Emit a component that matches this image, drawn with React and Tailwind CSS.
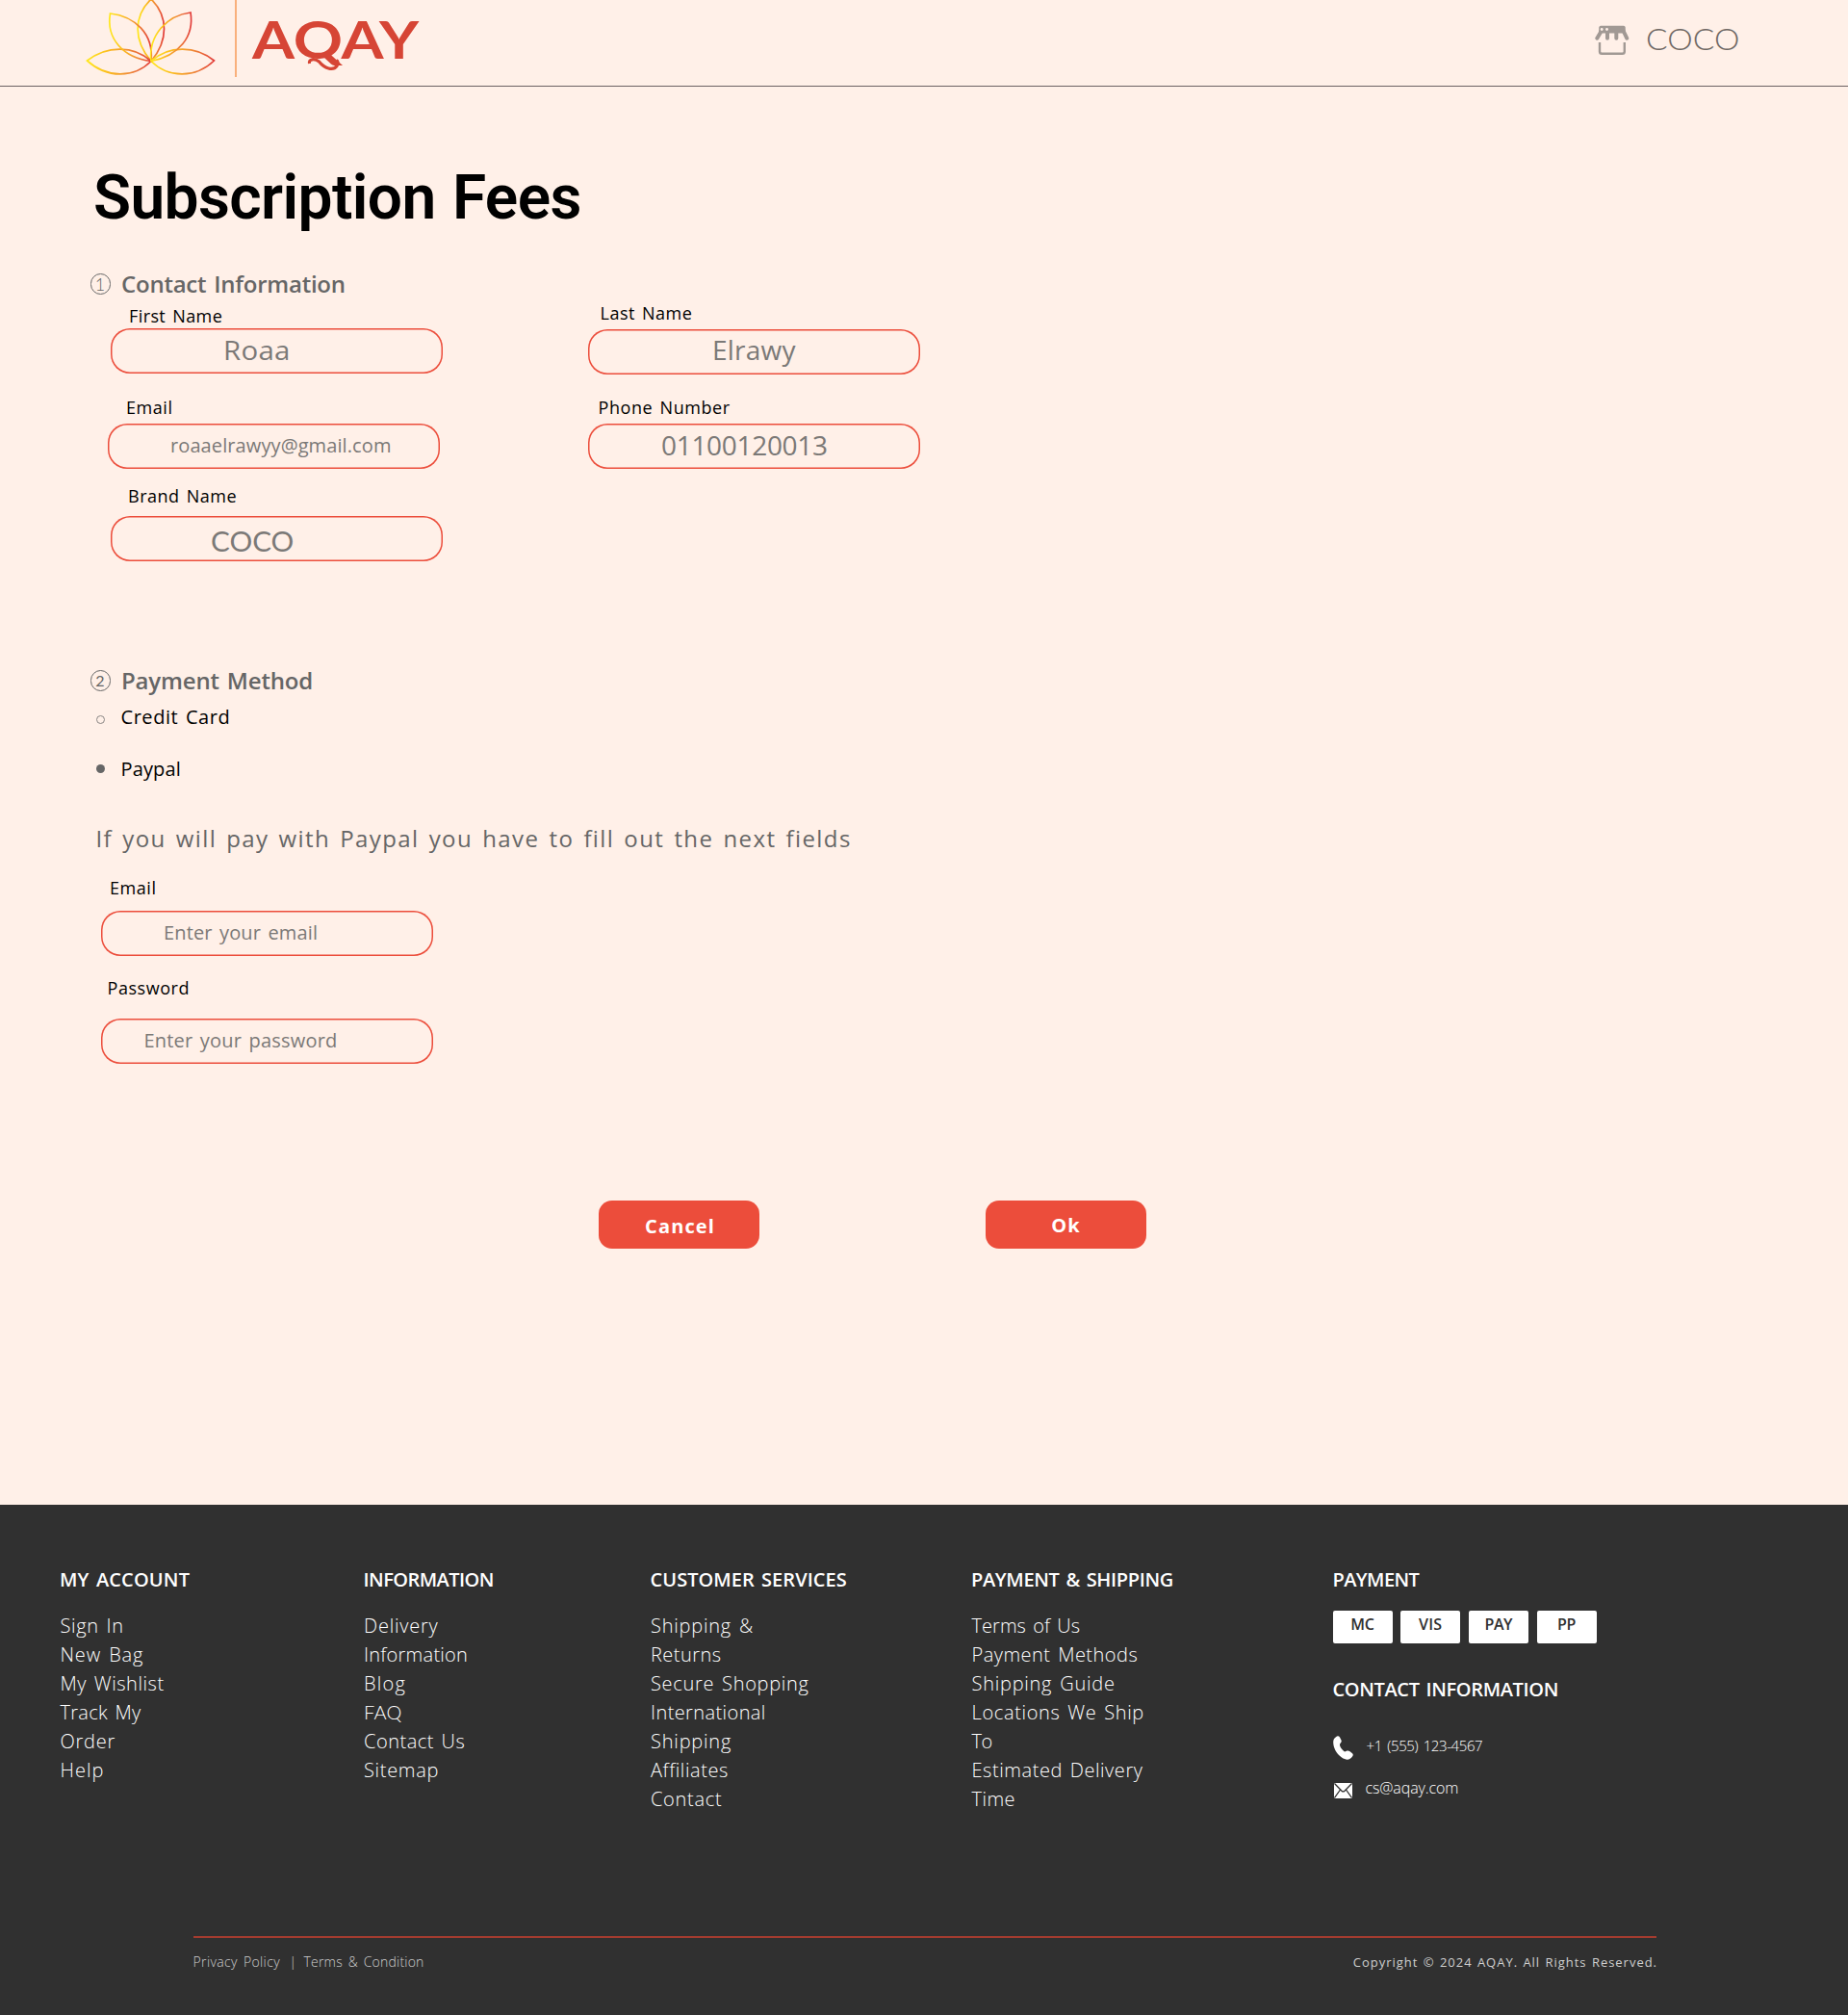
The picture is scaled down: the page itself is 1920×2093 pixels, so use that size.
import React from "react";

const OS = "font-['Open_Sans','Noto_Sans',sans-serif]";
const LATO = "font-['Lato','Open_Sans',sans-serif]";

const PETALS = [
  "M157 -1 C138.5 17 138.5 42 157 63.5 C175 42 175 17 157 -1Z",
  "M90.5 63 C111 47 139 47 157 63.5 C139 81.5 111 81.5 90.5 63Z",
  "M222.5 63 C203 47 175 47 157 63.5 C175 81.5 203 81.5 222.5 63Z",
  "M114.5 14 C140 17 160 35 157 63.5 C128 60 110 40 114.5 14Z",
  "M198 13 C174 16 154 36 157 63.5 C186 58 202 38 198 13Z",
];

function Lotus() {
  return (
    <svg className="h-20 w-[140px] shrink-0" viewBox="88 0 140 80" fill="none">
      <defs>
        <linearGradient id="petal" x1="0" y1="0" x2="1" y2="0">
          <stop offset="0" stopColor="#ffe81f" />
          <stop offset="0.3" stopColor="#fcc01c" />
          <stop offset="0.65" stopColor="#f08c35" />
          <stop offset="1" stopColor="#e23c3a" />
        </linearGradient>
      </defs>
      {PETALS.map((d) => (
        <path key={d} d={d} stroke="url(#petal)" strokeWidth="1.7" />
      ))}
    </svg>
  );
}

function Wordmark() {
  return (
    <svg className="ml-[14px] h-20 w-[180px] shrink-0" viewBox="260 0 180 80">
      <text
        x="262"
        y="61"
        textLength="173"
        lengthAdjust="spacingAndGlyphs"
        fill="#d64535"
        className="font-['Lato','Open_Sans',sans-serif] text-[54px] font-bold"
      >
        AQAY
      </text>
      <path
        d="M321.5 66 C320.5 61 327 60.5 331.500 64 C337 71 346 74 350 68.500 C351.500 66 351.500 63.500 349.500 62.800"
        fill="none"
        stroke="#d64535"
        strokeWidth="3.200"
      />
    </svg>
  );
}

function StoreIcon() {
  return (
    <svg className="mt-[26px] h-8 w-9 shrink-0" viewBox="0 0 36 32" fill="none">
      <path d="M6 .8H30Q31.500 .8 31.700 2.500L32 8.500H4L4.300 2.500Q4.500 .8 6 .8Z" fill="#a19994" />
      <path d="M6 7.500L2.300 13.700M13 7V13.700M22.300 7V13.700M30.300 7.500L33.200 13.700" stroke="#a19994" strokeWidth="4" strokeLinecap="round" />
      <path d="M5 18V27.500Q5 29.800 7.300 29.800H28.500Q30.800 29.800 30.800 27.500V18" stroke="#a19994" strokeWidth="2.400" />
      <circle cx="7.200" cy="4.500" r="1.400" fill="#fff0e8" />
      <circle cx="12.500" cy="4.500" r="1.400" fill="#fff0e8" />
    </svg>
  );
}

function PhoneIcon() {
  return (
    <svg className="mt-[3px] h-[25px] w-[21px]" viewBox="0 0 21 25" fill="#fff">
      <path d="M3 1.200C4.500 -.3 6 0 7 1.500L8.600 4.800C9 6 8.400 7 7.600 7.800C6 9.200 7.500 13 11.500 16.300C12.800 16.800 13.500 16 14.500 15.600C15.500 15.200 16.500 15.400 17.500 16.200L20 18.200C21 19.200 21 20 20.200 21.300C17.500 25.500 13.500 25.600 9 22.500C3 18 .2 12 .2 6.500C.3 4 1.200 2.300 3 1.200Z" />
    </svg>
  );
}

function MailIcon() {
  return (
    <svg className="mt-2 ml-px h-4 w-[19px]" viewBox="0 0 19 16" fill="none">
      <rect width="19" height="16" rx="1" fill="#fff" />
      <path d="M.5 .5L8 8.200Q9.500 9.500 11 8.200L18.500 .5M.5 15.500L6.500 7M18.500 15.500L12.500 7" stroke="#303030" strokeWidth="1.300" />
    </svg>
  );
}

function Field({ label, labelClass, value, boxClass, valueClass }) {
  return (
    <div className="flex flex-col">
      <label className={`text-[18px] leading-6 whitespace-nowrap text-black [word-spacing:2px] ${labelClass}`}>{label}</label>
      <div className={`h-[47px] w-[345px] rounded-[20px] whitespace-nowrap text-[#7b7977] shadow-[inset_0_0_0_1.5px_#ec4d3b] ${boxClass}`}>
        <div className={valueClass}>{value}</div>
      </div>
    </div>
  );
}

function SectionTitle({ number, title, className, titleClass, numberClass }) {
  return (
    <div className={`ml-[93.5px] flex h-8 items-center text-[#666666] ${className}`}>
      <span className={`mt-[2px] flex h-[22px] w-[21px] items-center justify-center rounded-full border border-[#666666] leading-none ${LATO} ${numberClass}`}>
        {number}
      </span>
      <h2 className={`mt-[2px] ml-[11.5px] text-[24px] leading-8 font-semibold whitespace-nowrap [word-spacing:2px] ${titleClass}`}>{title}</h2>
    </div>
  );
}

const COLUMNS = [
  {
    title: "MY ACCOUNT",
    titleClass: "tracking-[0.15px]",
    width: "w-[315.5px]",
    links: [
      ["Sign In", "tracking-[0.65px]"],
      ["New Bag", "tracking-[0.9px]"],
      ["My Wishlist", "tracking-[0.55px]"],
      ["Track My", "tracking-[0.3px]"],
      ["Order", "tracking-[0.76px]"],
      ["Help", "tracking-[1.04px]"],
    ],
  },
  {
    title: "INFORMATION",
    titleClass: "tracking-[-0.55px]",
    width: "w-[298px]",
    links: [
      ["Delivery", "tracking-[0.77px]"],
      ["Information", "tracking-[0.25px]"],
      ["Blog", "tracking-[1.24px]"],
      ["FAQ", "h-[30px] leading-[28px] tracking-[0.27px] font-['Lato','Open_Sans',sans-serif]"],
      ["Contact Us", "tracking-[0.5px]"],
      ["Sitemap", "tracking-[0.69px]"],
    ],
  },
  {
    title: "CUSTOMER SERVICES",
    titleClass: "tracking-[0.05px]",
    width: "w-[333.5px]",
    links: [
      ["Shipping &", "tracking-[0.78px]"],
      ["Returns", "tracking-[0.45px]"],
      ["Secure Shopping", "tracking-[0.7px]"],
      ["International", "tracking-[0.4px]"],
      ["Shipping", "tracking-[0.8px]"],
      ["Affiliates", "tracking-[0.57px]"],
      ["Contact", "tracking-[0.71px]"],
    ],
  },
  {
    title: "PAYMENT & SHIPPING",
    titleClass: "tracking-[-0.34px]",
    width: "w-[376px]",
    links: [
      ["Terms of Us", "tracking-[0.05px]"],
      ["Payment Methods", "tracking-[0.48px]"],
      ["Shipping Guide", "tracking-[0.75px]"],
      ["Locations We Ship", "tracking-[0.64px]"],
      ["To", "tracking-[-0.49px]"],
      ["Estimated Delivery", "tracking-[0.56px]"],
      ["Time", "tracking-[0.44px]"],
    ],
  },
];

const CARDS = [
  ["MC", "tracking-[-0.24px]"],
  ["VIS", "tracking-[0.32px]"],
  ["PAY", "tracking-[-0.46px]"],
  ["PP", "tracking-[-0.34px]"],
];

function Header() {
  return (
    <header className="flex h-[90px] items-start border-b border-[#6b6163] pl-[88px]">
      <Lotus />
      <div className="ml-4 h-20 w-[2px] bg-[#f9b07c]" />
      <Wordmark />
      <div className="ml-auto flex w-[263.5px] items-start">
        <StoreIcon />
        <span className={`mt-5 ml-[17px] origin-left scale-x-[1.045] text-[32px] leading-10 font-light text-[#6f6864] ${LATO}`}>COCO</span>
      </div>
    </header>
  );
}

function Footer() {
  return (
    <footer className="mt-[266px] h-[530px] bg-[#303030] text-white">
      <div className="flex h-[448px] pt-[63px] pl-[62px]">
        {COLUMNS.map((c) => (
          <div key={c.title} className={`shrink-0 [word-spacing:2px] ${c.width}`}>
            <h3 className={`text-[20px] leading-[30px] font-semibold whitespace-nowrap ${c.titleClass}`}>{c.title}</h3>
            <ul className="mt-[18px] ml-[0.5px] text-[20px] leading-[30px] font-light whitespace-nowrap">
              {c.links.map(([text, cls]) => (
                <li key={text} className={cls}>{text}</li>
              ))}
            </ul>
          </div>
        ))}
        <div className="-ml-[0.5px] shrink-0">
          <h3 className="text-[20px] leading-[30px] font-semibold tracking-[-0.6px]">PAYMENT</h3>
          <div className="mt-[17px] flex gap-[8.7px]">
            {CARDS.map(([text, cls]) => (
              <div key={text} className={`h-[33.500px] w-[62px] rounded-[2px] bg-white text-center text-[16px] leading-7 font-semibold text-[#303030] ${cls}`}>
                {text}
              </div>
            ))}
          </div>
          <h3 className="mt-[33.500px] text-[20px] leading-[30px] font-semibold tracking-[-0.35px] [word-spacing:2px]">CONTACT INFORMATION</h3>
          <div className="mt-[30px] flex h-7 items-start">
            <PhoneIcon />
            <span className="mt-px ml-[14px] text-[15px] leading-6 font-light tracking-[-0.4px] [word-spacing:2px]">+1 (555) 123-4567</span>
          </div>
          <div className="mt-4 flex h-7 items-start">
            <MailIcon />
            <span className="mt-px ml-[14px] text-[16px] leading-6 font-light tracking-[-0.12px]">cs@aqay.com</span>
          </div>
        </div>
      </div>
      <div className="mr-[199px] ml-[201px] h-[2px] bg-[#a33b2f]" />
      <div className="mt-[15px] mr-[199px] ml-[200.500px] flex justify-between text-[#cfcfcf]">
        <div className="flex text-[14px] leading-5 font-light [word-spacing:2px]">
          <span className="w-[100px] tracking-[0.38px]">Privacy Policy</span>
          <span className="w-[15px]">|</span>
          <span className="tracking-[0.2px]">Terms &amp; Condition</span>
        </div>
        <span className="-mr-px text-[13px] leading-5 tracking-[0.98px] [word-spacing:1px]">Copyright © 2024 AQAY. All Rights Reserved.</span>
      </div>
    </footer>
  );
}

export default function App() {
  return (
    <div className={`w-[1920px] overflow-hidden bg-[#fff0e8] ${OS}`}>
      <Header />
      <main className="flex flex-col">
        <h1 className="mt-[76px] -mb-px ml-[97px] font-['Roboto',sans-serif] text-[64px] leading-[80px] font-semibold tracking-[-0.6px] text-black [word-spacing:2px]">
          Subscription Fees
        </h1>
        <SectionTitle number="1" title="Contact Information" numberClass="text-[18px] font-light" className="mt-[33px]" titleClass="tracking-[-0.24px]" />
        <div className="ml-[112px] flex gap-[151px]">
          <div className="flex w-[348px] flex-col">
            <Field label="First Name" value="Roaa" labelClass="mt-[6px] ml-[22px] tracking-[0.4px]" boxClass="mt-px ml-[3px]" valueClass="ml-[117px] origin-left scale-x-[1.05] text-[28px] leading-[45px] tracking-[0.3px]" />
            <Field label="Email" value="roaaelrawyy@gmail.com" labelClass="mt-[23px] ml-[19px] tracking-[0.55px]" boxClass="mt-[5px]" valueClass="pl-[65px] text-[20px] leading-[46px] tracking-[0.1px]" />
            <Field label="Brand Name" value="COCO" labelClass="mt-4 ml-[21px] tracking-[0.5px]" boxClass="mt-[9px] ml-[3px]" valueClass="ml-[104px] origin-left scale-x-[1.06] text-[28px] leading-[52px] font-['Lato','Open_Sans',sans-serif]" />
          </div>
          <div className="flex w-[345px] flex-col">
            <Field label="Last Name" value="Elrawy" labelClass="mt-[3px] ml-[12.500px] tracking-[0.5px]" boxClass="mt-[5px]" valueClass="pl-[129px] text-[28px] leading-[43px] tracking-[0.23px]" />
            <Field label="Phone Number" value="01100120013" labelClass="mt-[22px] ml-[10.500px] tracking-[0.58px]" boxClass="mt-[5px]" valueClass="pl-[76px] text-[28px] leading-[44px] tracking-[-0.31px]" />
          </div>
        </div>
        <SectionTitle number="2" title="Payment Method" numberClass="text-[16px]" className="mt-[107px]" titleClass="tracking-[-0.17px]" />
        <div className="mt-2 ml-[100px] flex h-7 items-center">
          <span className="mt-[6px] h-[9px] w-[9px] rounded-full border border-[#8a8684]" />
          <span className="mt-[2px] ml-[16.5px] text-[20px] leading-7 tracking-[0.55px] text-black [word-spacing:2px]">Credit Card</span>
        </div>
        <div className="mt-[26px] ml-[100px] flex h-7 items-center">
          <span className="mt-px h-[9px] w-[9px] rounded-full bg-[#666666]" />
          <span className="mt-[2px] ml-[16.5px] text-[20px] leading-7 tracking-[0.15px] text-black">Paypal</span>
        </div>
        <p className="mt-[43px] ml-[99.500px] text-[24px] leading-8 tracking-[1.4px] whitespace-nowrap text-[#666666] [word-spacing:2.5px]">
          If you will pay with Paypal you have to fill out the next fields
        </p>
        <div className="ml-[105px] flex flex-col">
          <Field label="Email" value="Enter your email" labelClass="mt-[23px] ml-[9px] tracking-[0.55px]" boxClass="mt-3" valueClass="pl-[65px] text-[20px] leading-[46px] tracking-[0.15px] [word-spacing:2px]" />
          <Field label="Password" value="Enter your password" labelClass="mt-[21px] ml-[6.5px] tracking-[0.55px]" boxClass="mt-5" valueClass="pl-[44.5px] text-[20px] leading-[46px] tracking-[0.2px] [word-spacing:2px]" />
        </div>
        <div className="mt-[142px] ml-[622px] flex gap-[235px] text-[20px] font-bold text-white">
          <button className="h-[50px] w-[167px] rounded-[14px] bg-[#ec4d3b]"><span className="block pl-[2px] leading-[54px] tracking-[1.1px]">Cancel</span></button>
          <button className="h-[50px] w-[167px] rounded-[14px] bg-[#ec4d3b]"><span className="block leading-[52px] tracking-[1.08px]">Ok</span></button>
        </div>
      </main>
      <Footer />
    </div>
  );
}
